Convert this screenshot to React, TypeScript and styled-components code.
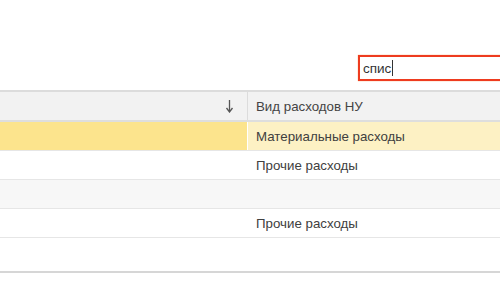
import React from 'react'
import styled, { createGlobalStyle } from 'styled-components'

interface Row {
  code: string,
  kind: string,
  shade?: 'selected' | 'muted',
  tall?: boolean,
}

const ROWS: Row[] = [
  { code: '', kind: 'Материальные расходы', shade: 'selected' },
  { code: '', kind: 'Прочие расходы' },
  { code: '', kind: '', shade: 'muted' },
  { code: '', kind: 'Прочие расходы' },
  { code: '', kind: '', tall: true },
]

const SortDownIcon = () => (
  <svg width="9" height="14" viewBox="0 0 9 14">
    <path d="M4.5 1 V12" stroke="#555" strokeWidth="1.3" />
    <path d="M1.5 9 L4.5 13 L7.5 9" fill="none" stroke="#555" strokeWidth="1.3" />
  </svg>
)

const App: React.FC = () => (
  <>
    <GlobalStyle />
    <Page>
      <Toolbar>
        <SearchBox>
          спис<Caret />
        </SearchBox>
      </Toolbar>
      <Table>
        <HeaderRow>
          <HeaderCell>
            <SortDownIcon />
          </HeaderCell>
          <HeaderCell>Вид расходов НУ</HeaderCell>
        </HeaderRow>
        {ROWS.map((row, i) => (
          <DataRow key={i} shade={row.shade} tall={row.tall}>
            <LeftCell shade={row.shade}>{row.code}</LeftCell>
            <RightCell shade={row.shade}>{row.kind}</RightCell>
          </DataRow>
        ))}
      </Table>
    </Page>
  </>
)

export default App

//#region Styled components
const GlobalStyle = createGlobalStyle`
  body {
    margin: 0;
    background: #fff;
    font-family: "Liberation Sans", Arial, sans-serif;
    font-size: 13.3px;
    color: #444;
  }
`

const Page = styled.div`
  width: 500px;
  height: 300px;
  overflow: hidden;
`

const Toolbar = styled.div`
  height: 90px;
  display: flex;
  justify-content: flex-end;
  padding-top: 55px;
  box-sizing: border-box;
`

const SearchBox = styled.div`
  width: 150px;
  height: 26px;
  margin-right: -8px;
  box-sizing: border-box;
  border: 2px solid #ee3b1f;
  box-shadow: 0 0 1px #f59a5a;
  padding: 0 0 0 3px;
  display: flex;
  align-items: center;
  font-size: 13.5px;
  color: #333;
`

const Caret = styled.span`
  display: inline-block;
  width: 1px;
  height: 16px;
  background: #333;
  margin-left: 1px;
`

const Table = styled.div`
  border-top: 2px solid #dcdcdc;
  border-bottom: 2px solid #d6d6d6;
`

const HeaderRow = styled.div`
  display: grid;
  grid-template-columns: 248px 1fr;
  height: 28px;
  background: #f2f2f2;
  border-bottom: 2px solid #dedede;
`

const HeaderCell = styled.div`
  display: flex;
  align-items: center;
  padding: 0 8px;
  border-right: 1px solid #dcdcdc;
  &:first-child {
    justify-content: flex-end;
    padding-right: 13px;
  }
  &:last-child {
    border-right: none;
  }
`

type Shade = 'selected' | 'muted' | undefined

const DataRow = styled.div<{ shade?: Shade, tall?: boolean }>`
  display: grid;
  grid-template-columns: 248px 1fr;
  height: ${p => p.tall ? 33 : 28}px;
  background: ${p => p.shade === 'muted' ? '#f7f7f7' : '#fff'};
  border-bottom: 1px solid #e6e6e6;
  &:last-child {
    border-bottom: none;
  }
`

const LeftCell = styled.div<{ shade?: Shade }>`
  background: ${p => p.shade === 'selected' ? '#fce48d' : 'transparent'};
  border-right: 1px solid ${p => p.shade === 'selected' ? '#fff' : 'transparent'};
`

const RightCell = styled.div<{ shade?: Shade }>`
  display: flex;
  align-items: center;
  padding: 0 8px;
  background: ${p => p.shade === 'selected' ? '#fdf1c4' : 'transparent'};
  color: #404040;
`
//#endregion
